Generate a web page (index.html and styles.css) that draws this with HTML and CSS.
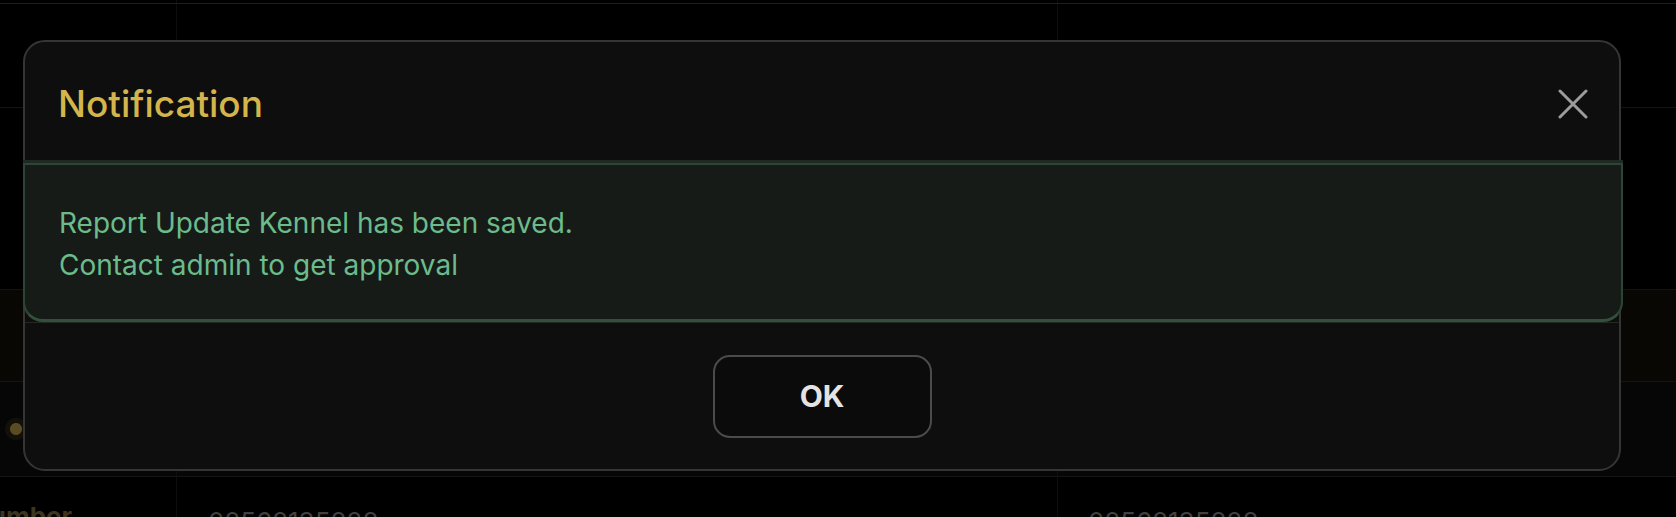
FILE: index.html
```html
<!DOCTYPE html>
<html lang="en">
<head>
<meta charset="utf-8">
<title>Notification</title>
<link rel="stylesheet" href="styles.css">
</head>
<body>
<div class="page">
  <div class="table">
    <div class="row row-top"><div class="cell"></div><div class="cell"></div><div class="cell last"></div></div>
    <div class="row r1"><div class="cell"></div><div class="cell"></div><div class="cell last"></div></div>
    <div class="row r2"><div class="cell"></div><div class="cell"></div><div class="cell last"></div></div>
    <div class="row r3"><div class="cell"></div><div class="cell"></div><div class="cell last"></div></div>
    <div class="row r4"><div class="cell dot-cell"><span class="dot"></span></div><div class="cell"></div><div class="cell last"></div></div>
    <div class="row r5">
      <div class="cell label-cell"><span class="label">Number</span></div>
      <div class="cell value-cell"><span class="value">02562135828</span></div>
      <div class="cell value-cell last"><span class="value">02562135828</span></div>
    </div>
  </div>

  <div class="overlay">
    <div class="modal">
      <div class="modal-header">
        <h2 class="modal-title">Notification</h2>
        <button class="close-btn" aria-label="Close">
          <svg width="30" height="30" viewBox="0 0 30 30">
            <path d="M2 2 L28 28 M28 2 L2 28" stroke="#9c9c9c" stroke-width="3" stroke-linecap="round" fill="none"/>
          </svg>
        </button>
      </div>
      <div class="modal-body">
        <p>Report Update Kennel has been saved.</p>
        <p>Contact admin to get approval</p>
      </div>
      <div class="modal-footer">
        <button class="ok-btn">OK</button>
      </div>
    </div>
  </div>
</div>
</body>
</html>
```

FILE: styles.css
```css
* {
  box-sizing: border-box;
  margin: 0;
  padding: 0;
}

html, body {
  width: 1676px;
  height: 517px;
  overflow: hidden;
  background: #000;
}

body {
  font-family: Inter, "Noto Sans", sans-serif;
}

.page {
  width: 1676px;
  height: 517px;
  position: relative;
}

/* background table */
.table {
  display: flex;
  flex-direction: column;
  width: 1676px;
}

.row {
  display: grid;
  grid-template-columns: 177px 881px 1fr;
  border-bottom: 1px solid #141414;
}

.cell {
  border-right: 1px solid #0d0d0d;
  overflow: hidden;
}

.cell.last {
  border-right: none;
}

.row-top {
  height: 4px;
  border-bottom-color: #1e1e1e;
}

.r1 { height: 104px; }
.r2 { height: 182px; }
.r3 { height: 92px; background: #080704; }
.r4 { height: 95px; background: #060606; }
.r5 { height: 40px; border-bottom: none; }

.dot-cell {
  display: flex;
  align-items: center;
  padding-left: 5px;
}

.dot {
  width: 22px;
  height: 22px;
  border-radius: 50%;
  background: radial-gradient(circle, #5a4c22 0 5.5px, #121009 6.5px 11px);
}

.label-cell {
  display: flex;
  padding-top: 24px;
}

.label {
  margin-left: -30px;
  font-size: 26px;
  font-weight: 700;
  color: #3d3521;
  white-space: nowrap;
}

.value-cell {
  padding-top: 29px;
  padding-left: 31px;
}

.value-cell.last {
  padding-left: 30px;
}

.value {
  font-size: 26px;
  color: #404040;
  white-space: nowrap;
}

/* modal overlay */
.overlay {
  position: absolute;
  inset: 0;
  padding: 40px 0 0 23px;
}

.modal {
  width: 1598px;
  height: 431px;
  background: #0e0e0e;
  border: 2px solid #353535;
  border-radius: 22px;
  display: flex;
  flex-direction: column;
}

.modal-header {
  height: 121px;
  display: flex;
  align-items: center;
  justify-content: space-between;
  padding: 2px 31px 0 33px;
}

.modal-title {
  font-size: 37px;
  font-weight: 500;
  color: #d4b54c;
  line-height: 1;
}

.close-btn {
  background: none;
  border: none;
  width: 30px;
  height: 30px;
  display: flex;
}

.modal-body {
  height: 159px;
  margin: 0 -4px 0 -2px;
  background: #161b17;
  border: 2px solid #2d4536;
  border-bottom: 3px solid #33503d;
  border-radius: 0 0 20px 20px;
  box-shadow: 0 -3px 0 #1f2a22;
  padding: 37px 0 0 34px;
  font-size: 28px;
  line-height: 42px;
  color: #6cbb8c;
}

.modal-footer {
  flex: 1;
  border-top: 1px solid #262626;
  display: flex;
  align-items: center;
  justify-content: center;
}

.ok-btn {
  width: 219px;
  height: 83px;
  background: #0b0b0b;
  border: 2px solid #4b4b4b;
  border-radius: 17px;
  color: #e4e4e4;
  font-family: Inter, "Noto Sans", sans-serif;
  font-size: 30px;
  font-weight: 700;
}
```
